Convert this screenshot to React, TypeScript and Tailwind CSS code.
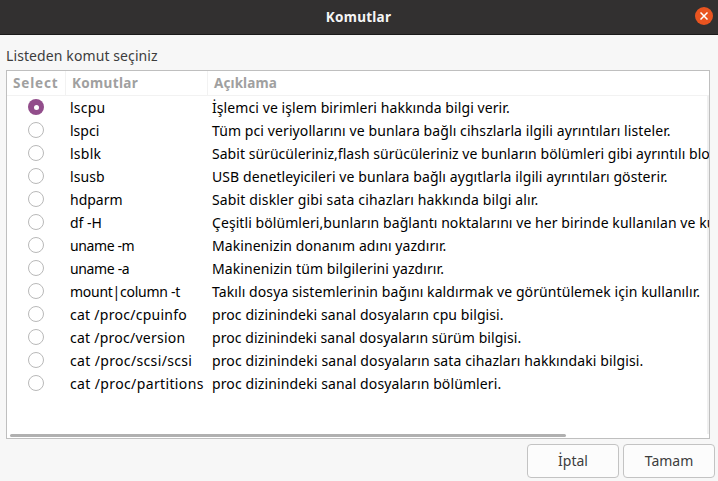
const rows: { command: string; ct: string; description: string; dt: string }[] = [
  { command: 'lscpu', ct: 'tracking-[0.2px]', description: 'İşlemci ve işlem birimleri hakkında bilgi verir.', dt: 'tracking-[0.085px]' },
  { command: 'lspci', ct: '', description: 'Tüm pci veriyollarını ve bunlara bağlı cihszlarla ilgili ayrıntıları listeler.', dt: 'tracking-[0.095px]' },
  { command: 'lsblk', ct: 'tracking-[0.25px]', description: 'Sabit sürücüleriniz,flash sürücüleriniz ve bunların bölümleri gibi ayrıntılı blo', dt: 'tracking-[0.035px]' },
  { command: 'lsusb', ct: 'tracking-[0.1px]', description: 'USB denetleyicileri ve bunlara bağlı aygıtlarla ilgili ayrıntıları gösterir.', dt: 'tracking-[0.085px]' },
  { command: 'hdparm', ct: '', description: 'Sabit diskler gibi sata cihazları hakkında bilgi alır.', dt: 'tracking-[0.14px]' },
  { command: 'df -H', ct: '', description: 'Çeşitli bölümleri,bunların bağlantı noktalarını ve her birinde kullanılan ve ku', dt: 'tracking-[0.07px]' },
  { command: 'uname -m', ct: 'tracking-[-0.4px]', description: 'Makinenizin donanım adını yazdırır.', dt: 'tracking-[0.07px]' },
  { command: 'uname -a', ct: 'tracking-[-0.35px]', description: 'Makinenizin tüm bilgilerini yazdırır.', dt: 'tracking-[0.09px]' },
  { command: 'mount|column -t', ct: 'tracking-[-0.27px]', description: 'Takılı dosya sistemlerinin bağını kaldırmak ve görüntülemek için kullanılır.', dt: 'tracking-[0.09px]' },
  { command: 'cat /proc/cpuinfo', ct: 'tracking-[0.27px]', description: 'proc dizinindeki sanal dosyaların cpu bilgisi.', dt: 'tracking-[0.09px]' },
  { command: 'cat /proc/version', ct: 'tracking-[0.25px]', description: 'proc dizinindeki sanal dosyaların sürüm bilgisi.', dt: 'tracking-[0.06px]' },
  { command: 'cat /proc/scsi/scsi', ct: 'tracking-[0.35px]', description: 'proc dizinindeki sanal dosyaların sata cihazları hakkındaki bilgisi.', dt: 'tracking-[0.11px]' },
  { command: 'cat /proc/partitions', ct: 'tracking-[0.37px]', description: 'proc dizinindeki sanal dosyaların bölümleri.', dt: 'tracking-[0.1px]' },
];

function Radio({ checked }: { checked: boolean }) {
  return checked ? (
    <span className="flex size-4 items-center justify-center rounded-full bg-[#924d8b]">
      <span className="size-[5px] rounded-full bg-white" />
    </span>
  ) : (
    <span className="block size-4 rounded-full border border-[#b9b9b9] bg-white" />
  );
}

export default function App() {
  return (
    <div className="flex h-[481px] w-[718px] flex-col overflow-hidden bg-[#f7f7f7] font-['Noto_Sans',sans-serif] text-[14px] text-[#3d3d3d]">
      <header className="grid h-[35px] shrink-0 grid-cols-[1fr_auto_1fr] items-center border-b border-[#1b1a1a] bg-[#323030] pr-[5px]">
        <span />
        <h1 className="pl-[4px] text-[13.5px] leading-[34px] font-bold tracking-[0.25px] text-[#f5f5f5]">Komutlar</h1>
        <button className="mb-0.5 flex size-[18px] items-center justify-center justify-self-end rounded-full bg-[#e95420]">
          <svg viewBox="0 0 8 8" className="size-2" fill="none" stroke="#fff" strokeWidth="1.5">
            <path d="M.5.5l7 7M7.5.5l-7 7" />
          </svg>
        </button>
      </header>
      <p className="h-[35px] shrink-0 pt-[11px] pl-1.5 leading-5 tracking-[0.1px]">Listeden komut seçiniz</p>
      <section className="mr-2 ml-1.5 flex h-[369px] shrink-0 flex-col overflow-hidden border border-[#bfbfbf] bg-white">
        <div className="grid h-[25px] shrink-0 grid-cols-[59px_142px_1fr] border-b border-[#f2f2f2] text-[13.5px] leading-[24px] font-bold text-[#a0a0a0]">
          <span className="border-r border-[#f2f2f2] pl-1.5 tracking-[0.85px]">Select</span>
          <span className="border-r border-[#f2f2f2] pl-1.5 tracking-[0.35px]">Komutlar</span>
          <span className="pl-1.5 tracking-[0.1px]">Açıklama</span>
        </div>
        <div className="flex min-h-0 flex-1 border-r-2 border-[#f0f0f0]">
          <div className="-mr-0.5 min-w-0 flex-1 text-black">
            {rows.map((row, i) => (
              <div key={row.command} className="grid h-[23px] grid-cols-[63px_142px_1fr] items-center whitespace-nowrap">
                <span className="pb-px pl-[21px]"><Radio checked={i === 0} /></span>
                <span><span className={row.ct}>{row.command}</span></span>
                <span><span className={row.dt}>{row.description}</span></span>
              </div>
            ))}
          </div>
        </div>
        <div className="h-1 shrink-0 pl-[3px]">
          <div className="h-[3px] w-[556px] rounded-full bg-[#b0b0b0]" />
        </div>
      </section>
      <footer className="flex justify-end gap-1 pt-[5px] pr-[3px]">
        <button className="h-[34px] w-[92px] rounded border border-[#c3c3c3] bg-[#fcfcfc] pb-0.5">İptal</button>
        <button className="h-[34px] w-[92px] rounded border border-[#c3c3c3] bg-[#fcfcfc] pb-0.5">Tamam</button>
      </footer>
    </div>
  );
}
